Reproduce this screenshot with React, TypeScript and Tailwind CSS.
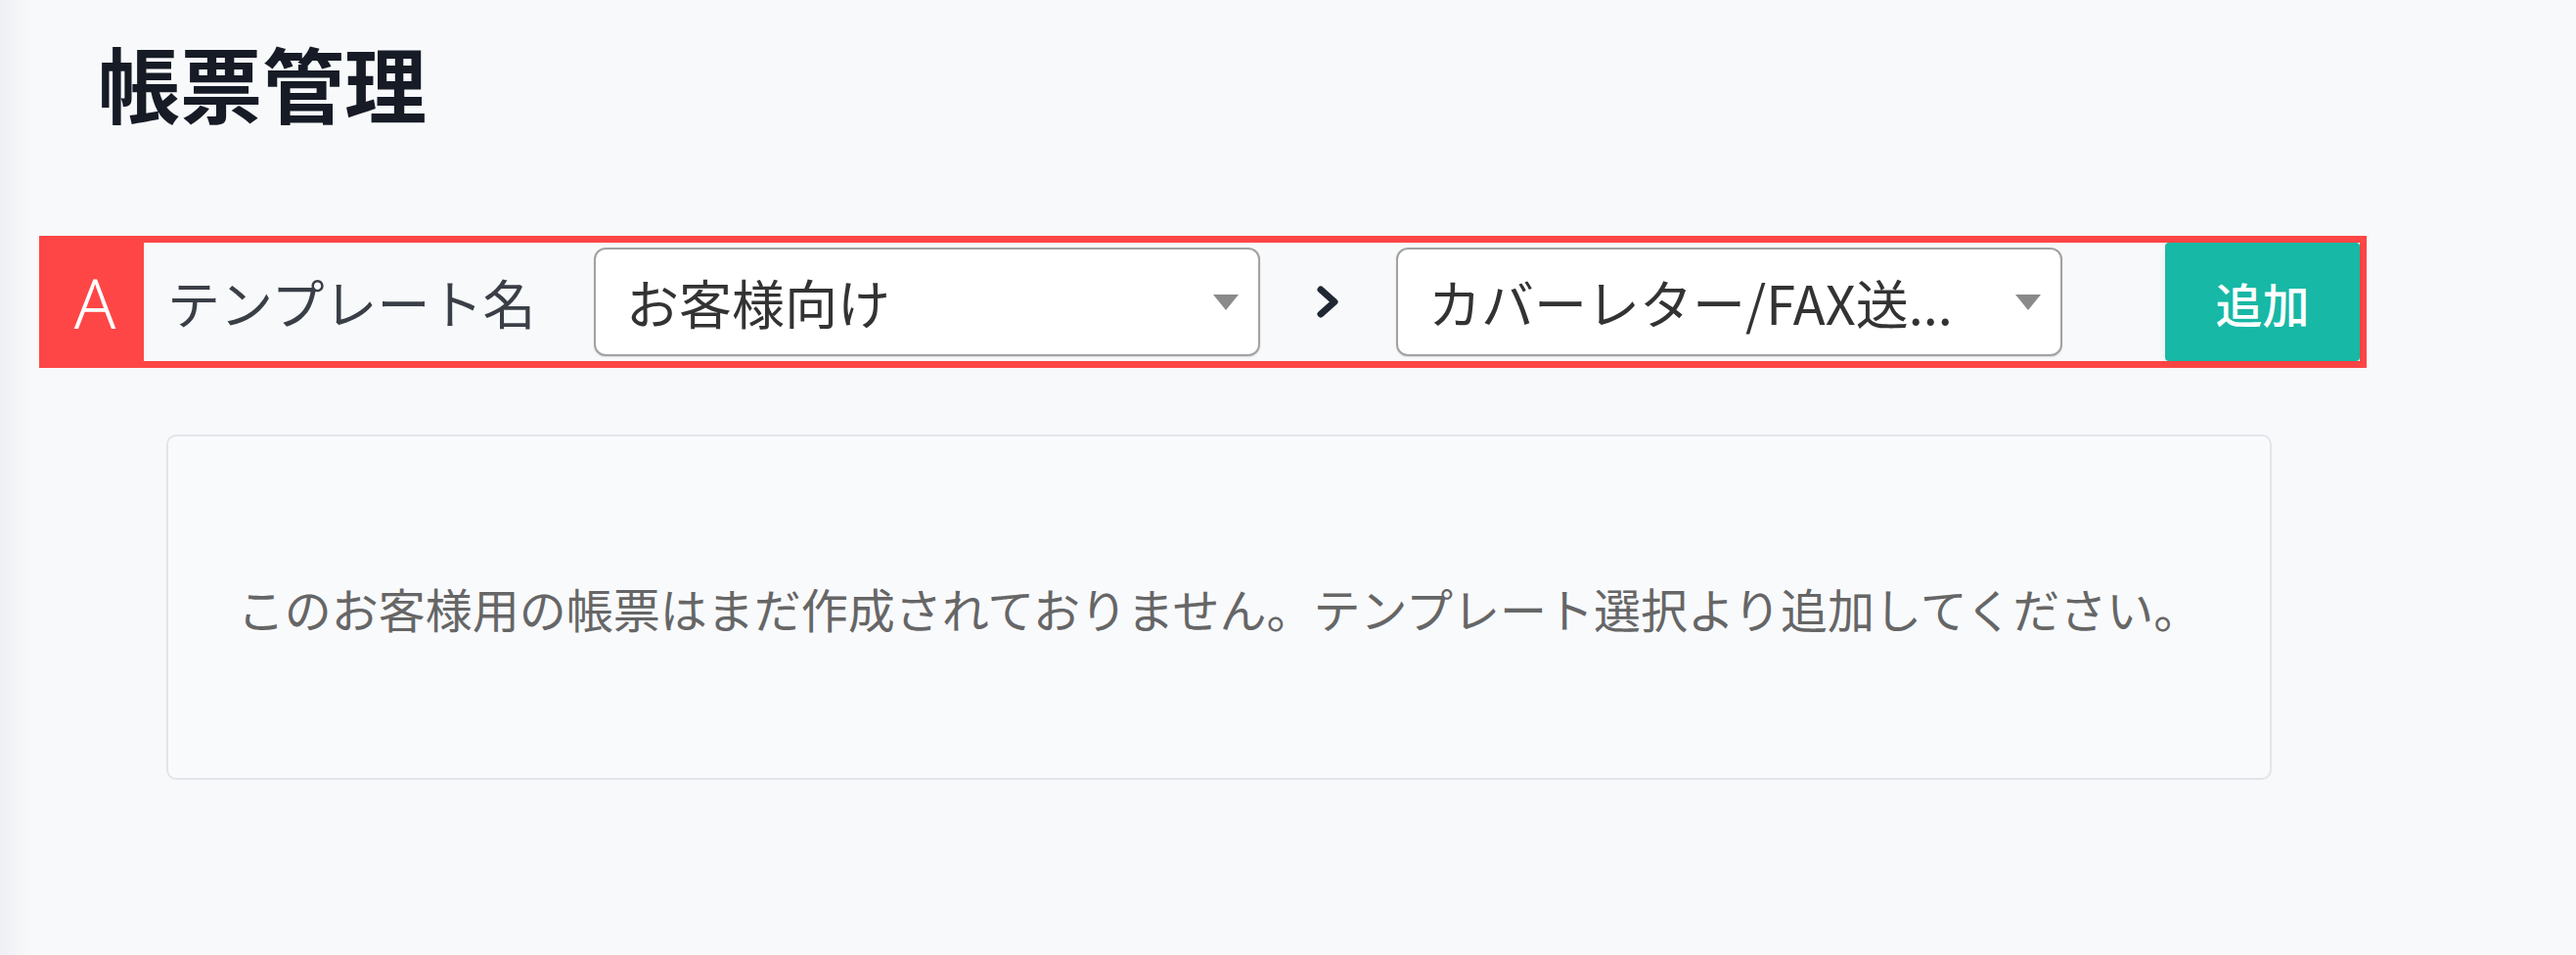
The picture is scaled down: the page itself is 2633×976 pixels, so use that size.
import React from "react";

const jp = "font-['Noto_Sans_CJK_JP','Noto_Sans',sans-serif]";

function Caret() {
  return (
    <svg width="26" height="16" viewBox="0 0 26 16" className="shrink-0">
      <polygon points="0,0 26,0 13,16" fill="#8a8a8a" />
    </svg>
  );
}

function SelectBox({ value }: { value: string }) {
  return (
    <div className="w-[681px] h-[111px] shrink-0 flex items-center justify-between pl-[31px] pr-[20px] bg-white border-2 border-[#a2a2a2] rounded-[12px] shadow-[0_1px_2px_rgba(0,0,0,0.12)]">
      <span className="text-[54px] leading-none text-[#333] whitespace-nowrap">{value}</span>
      <Caret />
    </div>
  );
}

export default function App() {
  return (
    <div className={`min-h-screen w-full flex bg-[#f8f9fb] ${jp}`}>
      <div className="w-[32px] shrink-0 bg-gradient-to-r from-[#eef0f3] to-[#f8f9fb]" />
      <main className="flex-1 pl-[8px] pt-[42px]">
        <h1 className="ml-[60px] text-[84px] leading-none font-bold text-[#161b26]">帳票管理</h1>

        {/* annotation A */}
        <div className="mt-[115px] w-[2379px] h-[135px] flex border-[7px] border-[#fe4646]">
          <div className="w-[100px] shrink-0 bg-[#fe4646] flex items-center justify-center">
            <span className="font-['Noto_Sans',sans-serif] font-light text-[70px] leading-none text-white">A</span>
          </div>
          <div className="flex-1 flex items-center">
            <div className="w-[460px] shrink-0 pl-[24px] text-[54px] leading-none text-[#3a3f47] whitespace-nowrap">
              テンプレート名
            </div>
            <SelectBox value="お客様向け" />
            <div className="w-[139px] shrink-0 flex items-center justify-center">
              <svg width="25" height="33" viewBox="0 0 25 33">
                <polyline
                  points="5,4 19,16.5 5,29"
                  fill="none"
                  stroke="#1f2733"
                  strokeWidth="7"
                  strokeLinecap="round"
                  strokeLinejoin="round"
                />
              </svg>
            </div>
            <SelectBox value="カバーレター/FAX送..." />
            <div className="flex-1" />
            <button className="w-[199px] h-full shrink-0 rounded-[4px] bg-[#17b8a5] text-white text-[48px] font-medium leading-none shadow-[0_4px_8px_rgba(0,0,0,0.06)]">
              追加
            </button>
          </div>
        </div>

        <div className="mt-[68px] ml-[130px] w-[2152px] h-[353px] flex items-center justify-center border-2 border-[#e3e5ea] rounded-[10px] bg-[#f9fafc]">
          <p className="text-[48px] leading-none text-[#666] whitespace-nowrap">
            このお客様用の帳票はまだ作成されておりません。テンプレート選択より追加してください。
          </p>
        </div>
      </main>
    </div>
  );
}
